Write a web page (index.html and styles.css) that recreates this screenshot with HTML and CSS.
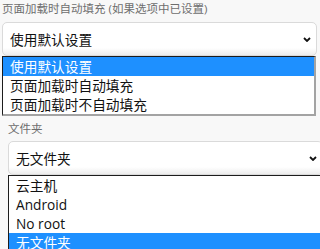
FILE: index.html
```html
<!DOCTYPE html>
<html>
  <head>
    <title>填充设置</title>
    <link rel="stylesheet" href="styles.css">
  </head>
  <body>
    <div class="field field-autofill">
      <div class="field-label">页面加载时自动填充 (如果选项中已设置)</div>
      <div class="select">
        <span>使用默认设置</span>
        <svg class="chevron" width="8" height="5" viewBox="0 0 8 5">
          <path d="M1 1 L4 4 L7 1" />
        </svg>
      </div>
      <div class="options">
        <div class="option selected">使用默认设置</div>
        <div class="option">页面加载时自动填充</div>
        <div class="option">页面加载时不自动填充</div>
      </div>
    </div>

    <div class="field field-folder">
      <div class="field-label">文件夹</div>
      <div class="select">
        <span>无文件夹</span>
        <svg class="chevron" width="8" height="5" viewBox="0 0 8 5">
          <path d="M1 1 L4 4 L7 1" />
        </svg>
      </div>
      <div class="options">
        <div class="option">云主机</div>
        <div class="option">Android</div>
        <div class="option">No root</div>
        <div class="option selected">无文件夹</div>
      </div>
    </div>
  </body>
</html>
```

FILE: styles.css
```css
body {
  margin: 0;
  background-color: #f8f8f8;
  font-family: "Open Sans", "Noto Sans CJK SC", sans-serif;
  color: #111;
  overflow: hidden;
}
.field {
  width: 315px;
}
.field-autofill {
  margin-left: 2px;
}
.field-folder {
  margin-left: 8px;
  margin-top: 4px;
}
.field-label {
  font-size: 11.5px;
  line-height: 17px;
  color: #6e6e6e;
  white-space: nowrap;
}
.select {
  box-sizing: border-box;
  height: 34px;
  margin-top: 4px;
  padding: 0 5px 0 7px;
  display: flex;
  align-items: center;
  justify-content: space-between;
  font-size: 13.7px;
  background: linear-gradient(#fff 78%, #ededed);
  border: 1px solid #dadada;
  border-radius: 5px;
}
.field-autofill .select {
  margin-top: 5px;
}
.chevron path {
  fill: none;
  stroke: #111;
  stroke-width: 1.8;
}
.options {
  width: 314px;
  box-sizing: border-box;
  background-color: #fff;
  border: 1px solid #1c1c1c;
  border-right: 2px solid #a3a3a3;
  border-bottom: 2px solid #a3a3a3;
}
.option {
  height: 19px;
  line-height: 19px;
  padding-left: 7px;
  font-size: 13.7px;
  white-space: nowrap;
}
.option.selected {
  background-color: #1e90ff;
  color: #fff;
}
```
